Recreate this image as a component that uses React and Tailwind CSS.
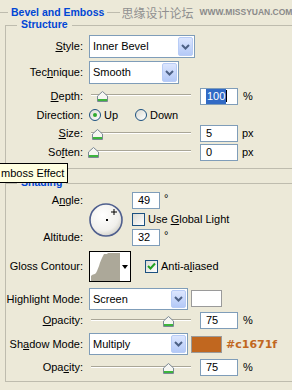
import React from 'react';

const LINE = 'bg-[#BEBCAE]';

function Label({ children }) {
  return <div className="w-[77px] shrink-0 text-right whitespace-nowrap">{children}</div>;
}

function Chevron() {
  return (
    <svg width="9" height="6" viewBox="0 0 9 6">
      <path d="M1 1 L4.5 4.5 L8 1" fill="none" stroke="#4D6185" strokeWidth="2" />
    </svg>
  );
}

function Select({ value, className }) {
  return (
    <div className={`flex items-stretch bg-white border border-[#7F9DB9] ${className}`}>
      <div className="flex-1 flex items-center pl-[3px]">{value}</div>
      <div className="w-[15px] m-px flex items-center justify-center rounded-[2px] bg-gradient-to-b from-[#DCE6FE] to-[#B4C9F7] border border-[#B8CCF6]">
        <Chevron />
      </div>
    </div>
  );
}

function Field({ children, className }) {
  return (
    <div className={`h-[17px] bg-white border border-[#7F9DB9] flex items-center pl-[5px] ${className}`}>
      {children}
    </div>
  );
}

function Thumb() {
  return (
    <svg width="11" height="11" viewBox="0 0 11 11">
      <path d="M5.5 0.5 L10.5 5 V10.5 H0.5 V5 Z" fill="#F6F6F2" stroke="#7A8894" />
      <rect x="1" y="8" width="9" height="2" fill="#3DB43D" />
    </svg>
  );
}

function Slider({ left }) {
  return (
    <div className="relative w-[105px] h-full shrink-0">
      <div className="absolute left-[2px] w-[100px] top-[7px] h-[2px] border-t border-[#A9A697] border-b border-b-white" />
      <div className="absolute top-[4px]" style={{ left }}>
        <Thumb />
      </div>
    </div>
  );
}

function Radio({ checked }) {
  return (
    <div className="w-[12px] h-[12px] rounded-full border border-[#1C5180] bg-gradient-to-br from-[#DCDBD3] to-white flex items-center justify-center">
      {checked && <div className="w-[4px] h-[4px] rounded-full bg-[#2FAA2F]" />}
    </div>
  );
}

function Checkbox({ checked }) {
  return (
    <div className="w-[13px] h-[13px] shrink-0 border border-[#1C5180] bg-gradient-to-br from-[#DCDBD3] to-white flex items-center justify-center">
      {checked && (
        <svg width="9" height="9" viewBox="0 0 9 9">
          <path d="M1 4 L3.5 6.5 L8 1.5" fill="none" stroke="#21A121" strokeWidth="2" />
        </svg>
      )}
    </div>
  );
}

function Legend({ children }) {
  return (
    <span className="absolute left-[11px] -top-[7px] px-[4px] bg-[#ECE9D8] font-bold text-[10.5px] text-[#0046D5]">
      {children}
    </span>
  );
}

export default function App() {
  return (
    <div className="w-[292px] h-[390px] bg-[#ECE9D8] overflow-hidden relative text-[11px] leading-none text-black font-['Liberation_Sans',Arial,sans-serif]">
      {/* titel */}
      <div className="h-[25px] flex items-center whitespace-nowrap">
        <div className={`w-[8px] h-px shrink-0 ${LINE}`} />
        <span className="shrink-0 px-[3px] font-bold text-[10.5px] text-[#0046D5]">Bevel and Emboss</span>
        <div className={`w-[13px] h-px shrink-0 ${LINE}`} />
        <span className="shrink-0 ml-px text-[12px] text-[#909090] font-['Noto_Sans_CJK_SC',sans-serif]">思缘设计论坛</span>
        <span className="shrink-0 ml-[6px] text-[8.5px] font-bold text-[#8A8A8A]">WWW.MISSYUAN.COM</span>
        <div className={`flex-1 min-w-[2px] h-px ml-[2px] ${LINE}`} />
      </div>

      {/* Structure */}
      <div className="ml-[5px] relative border-l border-t border-b border-[#BEBCAE] pt-[9px] pb-[7px] flex flex-col">
        <Legend>Structure</Legend>
        <div className="h-[23px] flex items-center gap-[6px]">
          <Label><u>S</u>tyle:</Label>
          <Select value="Inner Bevel" className="w-[106px] h-[23px]" />
        </div>
        <div className="h-[23px] mt-[3px] flex items-center gap-[6px]">
          <Label>Tec<u>h</u>nique:</Label>
          <Select value="Smooth" className="w-[90px] h-[23px]" />
        </div>
        <div className="h-[18px] mt-[3px] flex items-center gap-[6px]">
          <Label><u>D</u>epth:</Label>
          <Slider left={8} />
          <Field className="w-[38px]">
            <span className="bg-[#316AC5] text-white px-px py-[2px]">100</span>
            <span className="w-px h-[12px] bg-black" />
          </Field>
          <span className="ml-[-1px]">%</span>
        </div>
        <div className="h-[20px] flex items-center gap-[6px]">
          <Label>Direction:</Label>
          <div className="flex items-center">
            <Radio checked />
            <span className="ml-[3px]">Up</span>
            <div className="ml-[17px]"><Radio /></div>
            <span className="ml-[3px]">Down</span>
          </div>
        </div>
        <div className="h-[17px] flex items-center gap-[6px]">
          <Label><u>S</u>ize:</Label>
          <Slider left={3} />
          <Field className="w-[38px]">5</Field>
          <span className="ml-[-2px]">px</span>
        </div>
        <div className="h-[18px] mt-px flex items-center gap-[6px]">
          <Label>So<u>f</u>ten:</Label>
          <Slider left={-1} />
          <Field className="w-[38px]">0</Field>
          <span className="ml-[-2px]">px</span>
        </div>
      </div>

      {/* Shading */}
      <div className="ml-[5px] mt-[14px] relative border-l border-t border-b border-[#BEBCAE] pt-[8px] pb-[5px] flex flex-col">
        <Legend>Shading</Legend>
        <div className="h-[54px] flex gap-[6px]">
          <div className="w-[77px] shrink-0 flex flex-col justify-between text-right">
            <div className="h-[17px] flex items-center justify-end">A<u>n</u>gle:</div>
            <div className="h-[17px] flex items-center justify-end">Altitude:</div>
          </div>
          <svg width="34" height="34" viewBox="0 0 34 34" className="mt-[11px] shrink-0">
            <defs>
              <radialGradient id="dial" cx="40%" cy="35%" r="70%">
                <stop offset="0" stopColor="#FFFFFF" />
                <stop offset="0.7" stopColor="#F1F0EC" />
                <stop offset="1" stopColor="#CFCEC6" />
              </radialGradient>
            </defs>
            <circle cx="17" cy="17" r="16" fill="url(#dial)" stroke="#4F5F8E" strokeWidth="1.6" />
            <rect x="17" y="16" width="2" height="2" fill="#000" />
            <path d="M25 6 V12 M22 9 H28" stroke="#000" strokeWidth="1" />
          </svg>
          <div className="ml-[3px] flex flex-col justify-between">
            <div className="flex items-center">
              <Field className="w-[28px]">49</Field>
              <span className="ml-[4px] self-start mt-[1px]">°</span>
            </div>
            <div className="flex items-center">
              <Checkbox />
              <span className="ml-[3px] whitespace-nowrap">Use <u>G</u>lobal Light</span>
            </div>
            <div className="flex items-center">
              <Field className="w-[28px]">32</Field>
              <span className="ml-[4px] self-start mt-[1px]">°</span>
            </div>
          </div>
        </div>
        <div className="h-[31px] mt-[5px] flex items-center gap-[6px]">
          <Label>Gloss Contour:</Label>
          <div className="w-[42px] h-[31px] border border-black bg-white flex">
            <svg width="30" height="29" viewBox="0 0 30 29">
              <path d="M1 29 L1 24 C3 21 5 24 7 19 L9 14 C10 10 12 6 13 4 L14 2 L17 2 L18 1 L30 1 L30 29 Z" fill="#ACA899" />
            </svg>
            <div className="flex-1 flex items-center justify-center">
              <svg width="6" height="4" viewBox="0 0 6 4"><path d="M0 0 H6 L3 4 Z" fill="#000" /></svg>
            </div>
          </div>
          <div className="ml-[8px] flex items-center">
            <Checkbox checked />
            <span className="ml-[3px]">Anti-a<u>l</u>iased</span>
          </div>
        </div>
        <div className="h-[22px] mt-[6px] flex items-center gap-[6px]">
          <Label>Highlight Mode:</Label>
          <Select value="Screen" className="w-[99px] h-[22px]" />
          <div className="w-[31px] h-[17px] bg-white border border-[#9A9A9A] ml-[-3px] self-start mt-[2px]" />
        </div>
        <div className="h-[17px] mt-[2px] flex items-center gap-[6px]">
          <Label><u>O</u>pacity:</Label>
          <Slider left={74} />
          <Field className="w-[38px]">75</Field>
          <span className="ml-[-1px]">%</span>
        </div>
        <div className="h-[22px] mt-[4px] flex items-center gap-[6px]">
          <Label>Sh<u>a</u>dow Mode:</Label>
          <Select value="Multiply" className="w-[99px] h-[22px]" />
          <div className="w-[31px] h-[17px] bg-[#C1671F] border border-[#9A9A9A] ml-[-3px]" />
          <span className="ml-[-2px] font-bold text-[11px] text-[#C1671F] font-['DejaVu_Sans',sans-serif]">#c1671f</span>
        </div>
        <div className="h-[17px] mt-[4px] flex items-center gap-[6px]">
          <Label>Opa<u>c</u>ity:</Label>
          <Slider left={74} />
          <Field className="w-[38px]">75</Field>
          <span className="ml-[-1px]">%</span>
        </div>
      </div>

      {/* tooltip */}
      <div className="absolute left-[-3px] top-[163px] w-[71px] h-[20px] bg-[#FFFFE1] border border-black flex items-center pl-[3px] whitespace-nowrap">
        mboss Effect
      </div>
    </div>
  );
}
